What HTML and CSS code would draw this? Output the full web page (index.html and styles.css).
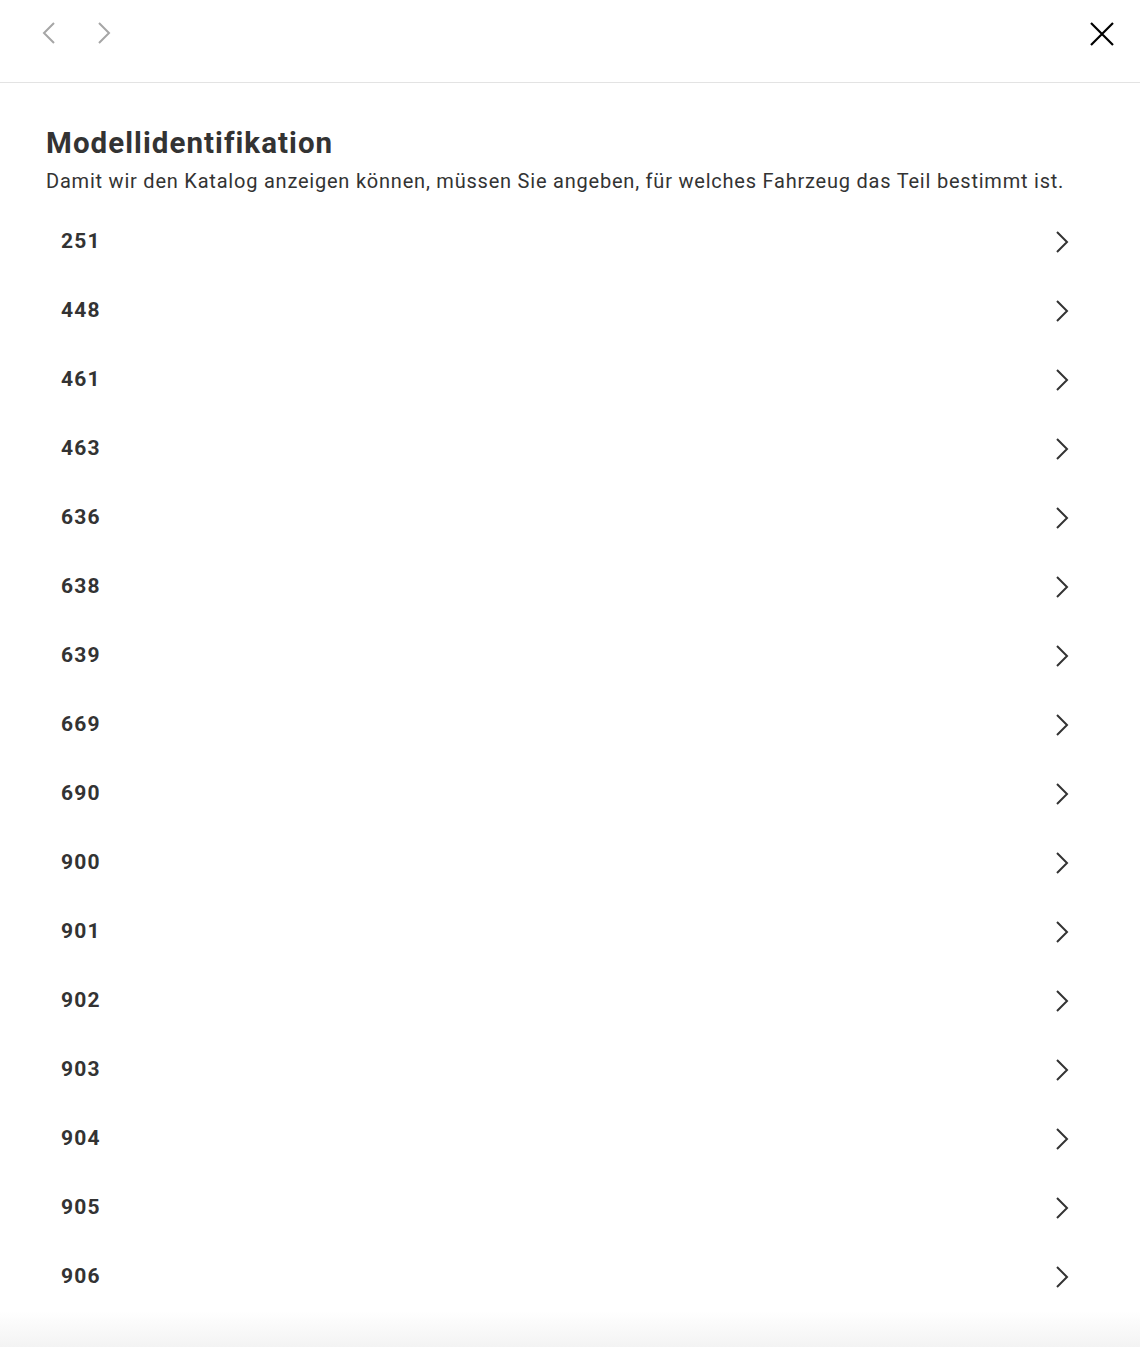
FILE: index.html
```html
<!DOCTYPE html>
<html lang="de">
<head>
    <meta charset="UTF-8">
    <meta name="viewport" content="width=device-width, initial-scale=1.0">
    <title>Modellidentifikation</title>
    <link rel="stylesheet" href="styles.css">
</head>
<body>
    <div class="topbar">
        <div class="nav-arrows">
            <button class="nav-btn" aria-label="Zurück">
                <svg width="14" height="24" viewBox="0 0 14 24"><polyline points="12,2 2,12 12,22" fill="none" stroke="#a6a6a6" stroke-width="2"/></svg>
            </button>
            <button class="nav-btn" aria-label="Weiter">
                <svg width="14" height="24" viewBox="0 0 14 24"><polyline points="2,2 12,12 2,22" fill="none" stroke="#a6a6a6" stroke-width="2"/></svg>
            </button>
        </div>
        <button class="close-btn" aria-label="Schließen">
            <svg width="24" height="24" viewBox="0 0 24 24"><path d="M1 1 L23 23 M23 1 L1 23" stroke="#000" stroke-width="2.2" fill="none"/></svg>
        </button>
    </div>

    <div class="content">
        <h2 class="title">Modellidentifikation</h2>
        <p class="subtitle">Damit wir den Katalog anzeigen können, müssen Sie angeben, für welches Fahrzeug das Teil bestimmt ist.</p>

        <ul class="model-list" id="modelList">
            <!-- rows are filled in below -->
        </ul>
    </div>
    <div class="bottom-fade"></div>

    <script>
        const models = ["251", "448", "461", "463", "636", "638", "639", "669", "690", "900", "901", "902", "903", "904", "905", "906"];
        const list = document.getElementById("modelList");
        models.forEach(m => {
            let li = document.createElement("li");
            li.className = "model-row";
            li.innerHTML = `
                <span class="model-name">${m}</span>
                <svg class="chevron" width="16" height="26" viewBox="0 0 16 26"><polyline points="3,3 13,13 3,23" fill="none" stroke="#333" stroke-width="2"/></svg>
            `;
            list.appendChild(li);
        });
    </script>
</body>
</html>
```

FILE: styles.css
```css
body {
    margin: 0;
    font-family: Roboto, "Noto Sans", sans-serif;
    color: #333;
    background: #fff;
}

.topbar {
    height: 83px;
    border-bottom: 1px solid #e3e3e3;
    display: flex;
    align-items: flex-start;
    justify-content: space-between;
    padding: 21px 26px 0 42px;
    box-sizing: border-box;
}
.nav-arrows {
    display: flex;
    gap: 41px;
}
.nav-btn, .close-btn {
    background: none;
    border: none;
    padding: 0;
    cursor: pointer;
}
.close-btn {
    margin-top: 1px;
}

.content {
    padding: 43px 70px 0 46px;
}
.title {
    margin: 0;
    font-size: 29.5px;
    line-height: 34px;
    font-weight: 700;
    letter-spacing: 1.05px;
    color: #333;
}
.subtitle {
    margin: 7px 0 0;
    font-size: 20px;
    line-height: 28px;
    letter-spacing: 0.78px;
    color: #333;
}

.model-list {
    list-style: none;
    margin: 12px 0 0;
    padding: 0;
}
.model-row {
    height: 69px;
    display: flex;
    align-items: center;
    justify-content: space-between;
    padding-left: 15px;
    cursor: pointer;
}
.model-name {
    font-size: 21px;
    font-weight: 700;
    letter-spacing: 1.2px;
    margin-top: -2px;
}

.bottom-fade {
    height: 36px;
    background: linear-gradient(#fff, #f3f3f3);
}
```
